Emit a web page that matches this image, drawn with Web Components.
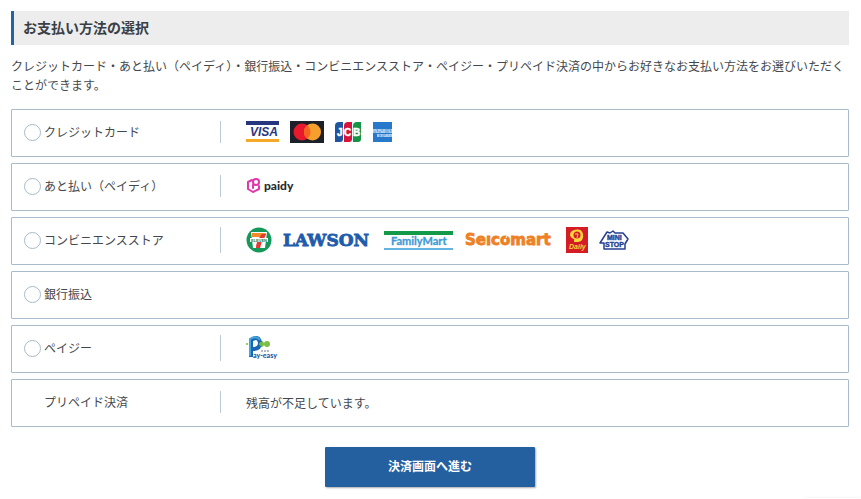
<!DOCTYPE html>
<html lang="ja">
<head>
<meta charset="utf-8">
<meta name="viewport" content="width=device-width, initial-scale=1">
<title>お支払い方法の選択</title>
<style>
    body {
        margin: 0;
        background: #fff;
        color: #44484c;
        font-family: "Noto Sans CJK JP", sans-serif;
        font-size: 12px;
        line-height: 19px;
    }
</style>
</head>
<body>

<payment-page>
    <section-title>お支払い方法の選択</section-title>
    <lead-text>クレジットカード・あと払い（ペイディ）・銀行振込・コンビニエンスストア・ペイジー・プリペイド決済の中からお好きなお支払い方法をお選びいただくことができます。</lead-text>
    <payment-list>
        <payment-option value="credit" label="クレジットカード">
            <brand-logo name="visa"></brand-logo>
            <brand-logo name="mastercard"></brand-logo>
            <brand-logo name="jcb"></brand-logo>
            <brand-logo name="amex"></brand-logo>
        </payment-option>
        <payment-option value="paidy" label="あと払い（ペイディ）">
            <brand-logo name="paidy"></brand-logo>
        </payment-option>
        <payment-option value="store" label="コンビニエンスストア">
            <brand-logo name="seven"></brand-logo>
            <brand-logo name="lawson"></brand-logo>
            <brand-logo name="familymart"></brand-logo>
            <brand-logo name="seicomart"></brand-logo>
            <brand-logo name="daily"></brand-logo>
            <brand-logo name="ministop"></brand-logo>
        </payment-option>
        <payment-option value="bank" label="銀行振込"></payment-option>
        <payment-option value="payeasy" label="ペイジー">
            <brand-logo name="payeasy"></brand-logo>
        </payment-option>
        <payment-option value="prepaid" label="プリペイド決済" unavailable>残高が不足しています。</payment-option>
    </payment-list>
    <submit-button>決済画面へ進む</submit-button>
</payment-page>
<corner-panel></corner-panel>

<script>
const makeTemplate = html => {
    const template = document.createElement ("template");
    template.innerHTML = html;
    return template;
};

class BaseElement extends HTMLElement {
    constructor () {
        super ();
        this.attachShadow ({mode: "open"});
        this.shadowRoot.appendChild (this.constructor.template.content.cloneNode (true));
    }
}

class PaymentPage extends BaseElement {
    static template = makeTemplate (`
<style>
    :host {
        display: block;
        padding: 11px 12px 11px 11px;
    }
</style>
<main><slot></slot></main>
`);
}

class SectionTitle extends BaseElement {
    static template = makeTemplate (`
<style>
    :host {
        display: block;
    }

    h2 {
        margin: 0;
        padding: 6px 9px 8px;
        border-left: 3px solid #2762a1;
        background: #ededed;
        color: #3a3f45;
        font-size: 14px;
        font-weight: bold;
        line-height: 20px;
    }
</style>
<h2><slot></slot></h2>
`);
}

class LeadText extends BaseElement {
    static template = makeTemplate (`
<style>
    :host {
        display: block;
        padding: 11px 0 15px;
    }

    p {
        margin: 0;
    }
</style>
<p><slot></slot></p>
`);
}

class PaymentList extends BaseElement {
    static template = makeTemplate (`
<style>
    :host {
        display: flex;
        flex-direction: column;
        gap: 6px;
    }
</style>
<slot></slot>
`);

    connectedCallback () {
        // each radio lives in its own shadow root, so the group is kept here
        this.addEventListener ("option-selected", event => {
            this.querySelectorAll ("payment-option").forEach (option => {
                if (option !== event.target) {
                    option.uncheck ();
                }
            });
        });
    }
}

class PaymentOption extends BaseElement {
    static template = makeTemplate (`
<style>
    :host {
        display: flex;
        align-items: center;
        box-sizing: border-box;
        min-height: 48px;
        padding: 0 12px 2px;
        border: 1px solid #a8bbc9;
        border-radius: 1px;
    }

    .choice {
        display: flex;
        align-items: center;
        gap: 3px;
        flex: 0 0 196px;
    }

    input {
        appearance: none;
        box-sizing: border-box;
        flex: none;
        width: 17px;
        height: 17px;
        margin: 0;
        border: 1px solid #a8bbc9;
        border-radius: 50%;
        background: #fff;
    }

    input:checked {
        background: radial-gradient(#2762a1 0 4px, #fff 5px);
    }

    label {
        padding-bottom: 2px;
    }

    :host([unavailable]) input {
        visibility: hidden;
    }

    .detail {
        display: flex;
        align-items: center;
        gap: 11px;
        min-height: 22px;
        padding-left: 25px;
        border-left: 1px solid #bccbd6;
    }
</style>
<div class="choice">
    <input type="radio" id="radio" name="payment">
    <label for="radio"></label>
</div>
<div class="detail"><slot></slot></div>
`);

    connectedCallback () {
        this.radio = this.shadowRoot.querySelector ("input");
        this.radio.value = this.getAttribute ("value");
        this.radio.disabled = this.hasAttribute ("unavailable");
        this.shadowRoot.querySelector ("label").textContent = this.getAttribute ("label");
        if (this.childNodes.length === 0) {
            this.shadowRoot.querySelector (".detail").remove ();
        }
        this.radio.addEventListener ("change", () => {
            this.dispatchEvent (new CustomEvent ("option-selected", {bubbles: true}));
        });
    }

    uncheck () {
        this.radio.checked = false;
    }
}

const logos = {
    visa: {label: "VISA", width: 33, height: 22, art: `
        <path fill="#27377f" d="M0 0h33v4H0z"/>
        <path fill="#f4a929" d="M0 18h33v3H0z"/>
        <text x="4" y="15" fill="#27377f" font-family="Liberation Sans" font-size="12" font-weight="bold" font-style="italic">VISA</text>`},
    mastercard: {label: "Mastercard", width: 34, height: 22, art: `
        <path fill="#1b2029" d="M0 0h34v22H0z"/>
        <circle cx="12" cy="11" r="8.5" fill="#e8192c"/>
        <circle cx="22.5" cy="11" r="8.5" fill="#f79f2c"/>
        <path fill="#f5641f" d="M17.2 4.3a8.5 8.5 0 0 1 0 13.4a8.5 8.5 0 0 1 0-13.4z"/>`},
    jcb: {label: "JCB", width: 27, height: 20, art: `
        <path fill="#1d559f" d="M4 0h4v17q0 3-3 3H0V4q0-4 4-4z"/>
        <path fill="#d6133c" d="M13 0h4v17q0 3-3 3H9V4q0-4 4-4z"/>
        <path fill="#179348" d="M22 0h4v17q0 3-3 3h-5V4q0-4 4-4z"/>
        <g fill="#fff" stroke="#fff" stroke-width="0.5" font-family="Liberation Sans" font-size="10" font-weight="bold">
            <text x="2" y="14">J</text><text x="9" y="14">C</text><text x="18" y="14">B</text>
        </g>`},
    amex: {label: "American Express", width: 19, height: 20, art: `
        <path fill="#2878cc" d="M0 0h19v20H0z"/>
        <path fill="#a9cdf0" d="M0 7h19v4H0zM4 12h15v3H4z"/>
        <g fill="none" stroke="#2878cc" stroke-width="0.6">
            <path d="M2 11V9M4 7l1 3M7 11V9M9 7v2M12 8h2M12 10h2M15 7v4M17 7l1 3"/>
            <path d="M6 13h2M6 14h2M10 12v3M12 12v2M15 13h1M17 14h1"/>
        </g>`},
    paidy: {label: "paidy", width: 48, height: 20, art: `
        <g fill="none" stroke="#e135ac" stroke-width="2" stroke-linecap="round" stroke-linejoin="round">
            <path d="M6 4L2 6v7l5 3 6-3v-3"/>
            <path d="M7 12V9"/>
            <circle cx="10" cy="6" r="3"/>
        </g>
        <text x="18" y="14" fill="#292b2d" font-family="Lato" font-size="12" font-weight="900">paidy</text>`},
    seven: {label: "7-ELEVEN", width: 26, height: 26, art: `
        <circle cx="13" cy="13" r="12.5" fill="#16985b"/>
        <path fill="#fff" d="M5 5h16l-2 16H7z"/>
        <path fill="#f28b2a" d="M6 6h14l-1 4H6z"/>
        <path fill="#e33a32" d="M16 7h4q-1 4-4 7l-2 7h-4q0-7 6-14z"/>
        <path fill="#fff" d="M4 11h18v4H4z"/>
        <text x="5" y="15" fill="#16854d" font-family="Liberation Sans" font-size="4" font-weight="bold">ELEVEN</text>`},
    lawson: {label: "LAWSON", width: 90, height: 18, art: `
        <text x="0" y="15" fill="#205bad" stroke="#205bad" stroke-width="0.8" font-family="DejaVu Serif" font-size="17" font-weight="bold">LAWSON</text>`},
    familymart: {label: "FamilyMart", width: 70, height: 20, art: `
        <path fill="#129a48" d="M0 1h69v4H0z"/>
        <path fill="#63b4e0" d="M0 18h69v2H0z"/>
        <text x="7" y="15" fill="#3e9bd5" stroke="#3e9bd5" stroke-width="0.3" font-family="Lato" font-size="11" font-weight="bold">FamilyMart</text>`},
    seicomart: {label: "Seicomart", width: 90, height: 18, art: `
        <text x="0" y="14" fill="#ee8125" stroke="#ee8125" stroke-width="0.8" font-family="DejaVu Sans" font-size="15" font-weight="bold">Seıcomart</text>
        <path d="M43 3l-2 4" stroke="#fff" stroke-width="1"/>`},
    daily: {label: "Daily", width: 22, height: 26, art: `
        <path fill="#d51c26" d="M0 0h22v26H0z"/>
        <path fill="#f7d83a" d="M6 4q9-4 11 3 1 7-5 8H8v-3h4q-7 1-8-4 0-3 2-4z"/>
        <circle cx="11" cy="8" r="3.5" fill="#d51c26"/>
        <path fill="none" stroke="#f7d83a" stroke-width="1" d="M9 7h3l-1 4"/>
        <text x="3" y="22" fill="#f7d83a" font-family="Liberation Sans" font-size="7" font-weight="bold" font-style="italic">Daily</text>`},
    ministop: {label: "MINI STOP", width: 30, height: 20, art: `
        <path fill="#fff" stroke="#253f91" stroke-width="1.5" stroke-linejoin="round" d="M5 19v-6H1l7-11 3 1 3-2 2 2h8l5 6-3 5v5z"/>
        <g fill="#253f91" stroke="#253f91" stroke-width="0.4" font-family="Liberation Sans" font-size="7" font-weight="bold">
            <text x="8" y="10">MINI</text>
            <text x="6" y="17">STOP</text>
        </g>`},
    payeasy: {label: "Pay-easy", width: 31, height: 26, art: `
        <g fill="#7bbf43">
            <circle cx="1" cy="9" r="1"/><circle cx="5" cy="9" r="2"/>
            <circle cx="15" cy="9" r="3"/><circle cx="21" cy="9" r="3"/>
        </g>
        <path fill="none" stroke="#1769b4" stroke-width="4" d="M5 22V5q8-5 9 3 0 6-7 6"/>
        <path fill="none" stroke="#44a6de" stroke-width="2" d="M4 21V4q6-4 10 1"/>
        <circle cx="15" cy="9" r="2" fill="#6fbb47"/>
        <path stroke="#65798b" stroke-width="1" stroke-dasharray="2 1" d="M15 16h9"/>
        <text x="7" y="23" fill="#17599f" font-family="Lato" font-size="7" font-weight="900">ay-easy</text>`}
};

class BrandLogo extends BaseElement {
    static template = makeTemplate (`
<style>
    :host {
        display: block;
        flex: none;
    }

    svg {
        display: block;
        overflow: visible;
    }
</style>
<svg role="img"></svg>
`);

    connectedCallback () {
        const logo = logos[this.getAttribute ("name")];
        const svg = this.shadowRoot.querySelector ("svg");
        svg.setAttribute ("width", logo.width);
        svg.setAttribute ("height", logo.height);
        svg.setAttribute ("aria-label", logo.label);
        svg.innerHTML = logo.art;
    }
}

class SubmitButton extends BaseElement {
    static template = makeTemplate (`
<style>
    :host {
        display: flex;
        justify-content: center;
        padding-top: 20px;
    }

    button {
        width: 210px;
        height: 40px;
        padding: 0 0 3px;
        border: 0;
        border-radius: 1px;
        background: #2460a0;
        box-shadow: 1px 1px 2px #0005;
        color: #fff;
        font: bold 12px/19px "Noto Sans CJK JP", sans-serif;
        cursor: pointer;
    }
</style>
<button type="button"><slot></slot></button>
`);
}

// top edge of the panel docked at the bottom of the window
class CornerPanel extends BaseElement {
    static template = makeTemplate (`
<style>
    :host {
        position: fixed;
        right: 0;
        bottom: 0;
        width: 56px;
        height: 1px;
        border-radius: 4px 0 0 0;
        background: #fff;
        box-shadow: 0 0 3px #0002;
    }
</style>
`);
}

customElements.define ("payment-page", PaymentPage);
customElements.define ("section-title", SectionTitle);
customElements.define ("lead-text", LeadText);
customElements.define ("payment-list", PaymentList);
customElements.define ("payment-option", PaymentOption);
customElements.define ("brand-logo", BrandLogo);
customElements.define ("submit-button", SubmitButton);
customElements.define ("corner-panel", CornerPanel);
</script>
</body>
</html>
